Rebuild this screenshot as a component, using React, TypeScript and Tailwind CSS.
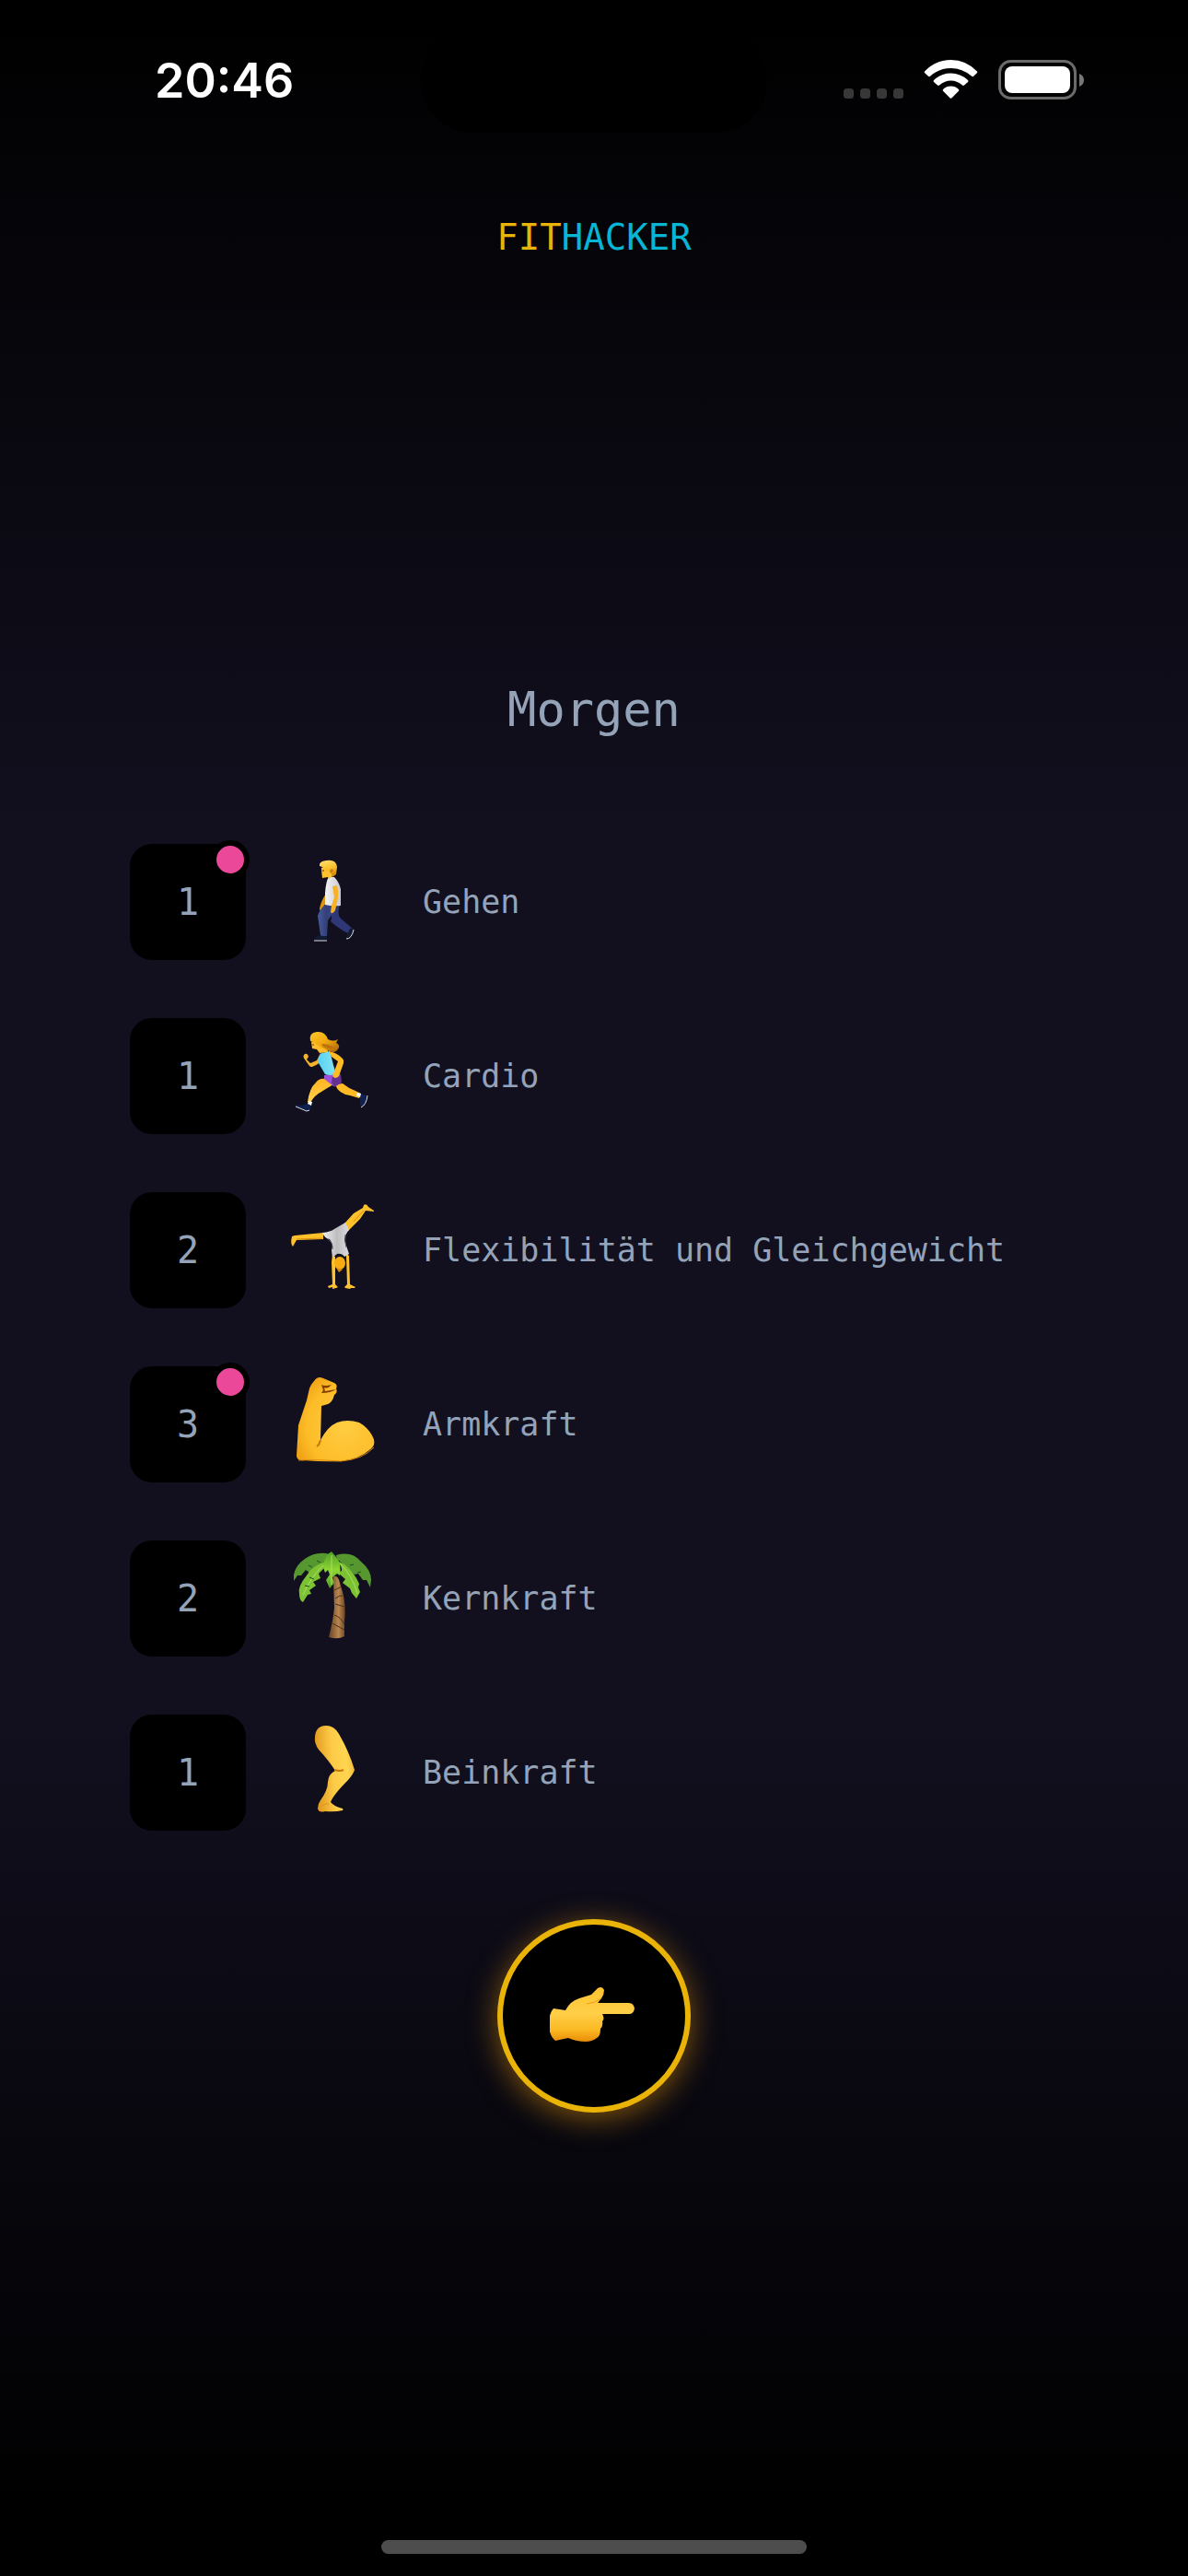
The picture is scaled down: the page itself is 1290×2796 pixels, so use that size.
import type { ReactNode } from "react";

function Walker() {
  return (
    <svg viewBox="0 3 120 130" className="h-full w-full" aria-hidden="true">
      <defs>
        <linearGradient id="jeans" x1="0" x2="1">
          <stop offset="0" stopColor="#465c9b" />
          <stop offset="0.45" stopColor="#344078" />
          <stop offset="1" stopColor="#3e488d" />
        </linearGradient>
        <linearGradient id="shirt" x1="0" x2="1">
          <stop offset="0" stopColor="#f4f4f6" />
          <stop offset="1" stopColor="#c8c8cf" />
        </linearGradient>
        <linearGradient id="hair" x1="0" y1="0" x2="0.3" y2="1">
          <stop offset="0" stopColor="#ffe174" />
          <stop offset="0.6" stopColor="#f9bf2c" />
          <stop offset="1" stopColor="#d18b08" />
        </linearGradient>
      </defs>
      <path d="M54 59Q49 66 47 75q0 3 2 2l6-10z" fill="#dd9511" />
      <path d="M57 72Q62 84 59 89Q64 94 74 100l6 3 4-5-15-13q-3-5 0-14z" fill="#303776" />
      <path d="M53 71h12Q61 82 56 88L55 105q-4 2-7-1L45 83q2-7 8-12z" fill="url(#jeans)" />
      <path d="M57 41l6 0q5 5 7 13v18q-9 1-17-1V58q1-13 4-17z" fill="url(#shirt)" />
      <path d="M61 51l5-1q2 7 1 14l-3 13q-3 5-5 2l1-7 3-9z" fill="#f8b325" />
      <path d="M49 31q0 4 1 11l6-1 1 2 4-3 1-4 2-6-3-5z" fill="#ffc12d" />
      <path d="M47 29q-1-5 7-6 11-2 12 7l-1 8-4 3-2-5-2-3-3 2-1-4z" fill="url(#hair)" />
      <path d="M58 34q3-4 4 0-1 3-4 2" fill="#ce8210" />
      <path d="M47 104q4 2 8 1l1 4-15 1q-1-3 6-6zM80 97l4-1 0 6-5 6-4-1z" fill="#101b31" />
      <path d="M41 110h14M76 108q6 0 8-10" stroke="#dde0e8" strokeWidth="1" fill="none" />
      <path d="M50 34h2" stroke="#4c2803" />
    </svg>
  );
}

function Runner() {
  return (
    <svg viewBox="0 3 120 130" className="h-full w-full" aria-hidden="true">
      <defs>
        <linearGradient id="runnerHair" x1="0" y1="0" x2="1" y2="1">
          <stop offset="0" stopColor="#ffc72c" />
          <stop offset="0.5" stopColor="#f2a90e" />
          <stop offset="1" stopColor="#a65d08" />
        </linearGradient>
        <linearGradient id="top" x1="0" x2="1">
          <stop offset="0" stopColor="#56d2f3" />
          <stop offset="1" stopColor="#86e2f3" />
        </linearGradient>
        <linearGradient id="runnerLeg" x1="0" y1="0" x2="0" y2="1">
          <stop offset="0" stopColor="#ffb521" />
          <stop offset="1" stopColor="#ffd14b" />
        </linearGradient>
      </defs>
      <path d="M48 43L44 51l-7 3-4-4 2-3q-1-4-4-3-3 2 0 6l5 7q2 2 5 0 6-2 9-8z" fill="#f5b32b" />
      <path d="M53 71l11 5q-9 5-15 9-8 4-12 12l-3-1q2-15 9-21 4-5 10-4z" fill="url(#runnerLeg)" />
      <path d="M64 77l8-1q6 5 14 8l6 3-2 5-10-3q-13-2-16-12z" fill="#ffba25" />
      <path d="M52 67l17-1 1 10-8 3-10-8z" fill="#9c50db" />
      <path d="M61 67l9-1 1 9-8 5-3-5z" fill="#663092" />
      <path d="M58 41L49 43Q44 49 46 54l7 12q5 2 11 0 0-5-2-10l-3-12z" fill="url(#top)" />
      <path d="M57 41q8 1 15 8 2 2 1 5l-5 14q-4 4-7 0l3-8 3-8-7-5z" fill="#ffbc24" />
      <path d="M38 31l1 7 5 1 3 4 9-1-1-8-8-6z" fill="#ffbe29" />
      <path d="M37 30q-2-9 7-10 9-1 12 8 6 3 11 0-1 2-2 4 4 2 3 5-4 9-14 2-8-3-14-8z" fill="url(#runnerHair)" />
      <path d="M49 33q7 0 14 4l-4 2-8-3" fill="#bd7209" />
      <path d="M21 99q8 2 13-1l4 3-2 5-15-5zM91 87l7 2q2 5-4 12l-3-1z" fill="#10214f" />
      <path d="M21 101l12 5 3-1M92 102q6-3 7-13" stroke="#dbdee8" strokeWidth="1" fill="none" />
      <path d="M35 95l4 1-1 4-4-2M88 86l4 1-1 4-4-2" fill="#fff" />
      <path d="M39 34l2 0" stroke="#663b0a" />
    </svg>
  );
}

function Cartwheel() {
  return (
    <svg viewBox="0 2 120 130" className="h-full w-full" aria-hidden="true">
      <defs>
        <linearGradient id="leotard" x1="0" x2="1">
          <stop offset="0" stopColor="#f2f2f2" />
          <stop offset="0.55" stopColor="#bdbdc0" />
          <stop offset="1" stopColor="#dcdce0" />
        </linearGradient>
      </defs>
      <path d="M51 48v7l-29 1-4 7q-3-3-1-11l3-1zM74 38L84 27l10-6 1-3q3-2 5 2l6 4v1l-9-1-6 9-13 13z" fill="#ffc12a" />
      <path d="M22 55l28-1M84 36l11-12" stroke="#da8d0c" strokeWidth="1" fill="none" />
      <path d="M61 72l-1 8 1 24-5 2 1 2 4-1 0 2 4-1 2-1-3-3 0-30zM75 70l4 3 1 31 6 3-1 1-4 0-1 1-5-1-1-1 3-3-1-30z" fill="#ffc12d" />
      <path d="M50 48q9-1 13-4l12-7 4 8q-4 4-5 11l5 15-5 3q-3-4-8-3l-5 4-1-8 1-4q0-4-3-8-5 0-8-7z" fill="url(#leotard)" />
      <path d="M56 55q6 4 5 11M75 50q-1 7 1 14" fill="none" stroke="#57575b" />
      <ellipse cx="69" cy="81" rx="6" ry="7" fill="#f7ac14" />
      <path d="M65 86l3 5 4-3z" fill="#d88c08" />
    </svg>
  );
}

function Biceps() {
  return (
    <svg viewBox="0 1 120 130" className="h-full w-full" aria-hidden="true">
      <defs>
        <radialGradient id="arm" cx="0.62" cy="0.58" r="0.68">
          <stop offset="0" stopColor="#ffcd42" />
          <stop offset="0.72" stopColor="#fdbc28" />
          <stop offset="1" stopColor="#f0a315" />
        </radialGradient>
      </defs>
      <path d="M36 27q2-5 5-8 4-6 10-3l12 5q4 2 2 6 2 5-2 7-2 8-7 10l-7 2-1 37q8-15 18-19 11-4 24 0 9 5 14 14 6 10-3 16-10 9-30 12-20 1-40-1-9 1-9-5l2-33 9-27z" fill="url(#arm)" />
      <path d="M24 105q20-1 46 1 24-2 36-15" fill="none" stroke="#d98a0c" strokeWidth="1" />
      <path d="M44 90q3-2 4-7" fill="none" stroke="#c47a08" strokeWidth="2" />
      <path d="M49 23q4 2 11 0-4 5-8 3l1 4 12-2q-6 4-16 4l2-3z" fill="#843e00" />
    </svg>
  );
}

function Palm() {
  return (
    <svg viewBox="0 0 120 130" className="h-full w-full" aria-hidden="true">
      <defs>
        <linearGradient id="trunk" x1="0" x2="1">
          <stop offset="0" stopColor="#674122" />
          <stop offset="0.6" stopColor="#b88751" />
          <stop offset="1" stopColor="#70451f" />
        </linearGradient>
        <linearGradient id="leaf" x1="0" y1="0" x2="0" y2="1">
          <stop offset="0" stopColor="#4e9d25" />
          <stop offset="0.5" stopColor="#8dd733" />
          <stop offset="1" stopColor="#4e9e29" />
        </linearGradient>
      </defs>
      <path d="M62 41q5-2 7 7l3 10q4 14 2 33l0 15q-7 4-17 1 5-20 6-32z" fill="url(#trunk)" />
      <path d="M63 56l8-4M64 65q5-4 8-3M64 71l10 3M63 83q7 2 11 10M61 92l13 7" stroke="#4a301c" strokeWidth="1" fill="none" />
      <path d="M58 17Q44 13 31 22q-10 7-12 17l0 7 4-6 4 0 5-6 4 3 16-11 7-6zM65 18q17-5 27 7 11 9 11 20l-1 8-4-8-4 0-5-7-4 1-19-17z" fill="#56982f" />
      <path d="M55 25q-15 3-22 15-10 12-8 20 0 7 4 9l5-8 4-1-2-4 7-5-3-4 8-4-2-5 6-6zM66 24q6 7 5 11l-4 2 8 7-3 4 8 6 2 5 5 6 4-7-2-5 1-4q-5-12-16-21z" fill="#7cc334" />
      <path d="M60 14q-8 4-9 17l2 6 3-3 2 5-4 6 4 9 5-6-2-6 5-4 3 2q2-14-4-20z" fill="url(#leaf)" />
      <path d="M29 61q9-20 22-32M60 18v32M69 27q14 13 19 33" stroke="#b1dd65" strokeWidth="1" fill="none" />
      <path d="M35 29l4 2M44 24l4 2M84 28l-4 1M92 36l-4 1M36 42l5 2M31 51l5 1" stroke="#1c4d21" strokeWidth="1" />
    </svg>
  );
}

function Leg() {
  return (
    <svg viewBox="0 9 120 130" className="h-full w-full" aria-hidden="true">
      <defs>
        <linearGradient id="leg" x1="0" x2="1" y1="0.15" y2="0">
          <stop offset="0" stopColor="#e39b1f" />
          <stop offset="0.4" stopColor="#fdcb47" />
          <stop offset="0.75" stopColor="#ffd650" />
          <stop offset="1" stopColor="#f0ad2c" />
        </linearGradient>
      </defs>
      <path d="M42 35Q43 23 54 23q9 0 14 9 11 19 17 39-1 4-7 11-16 16-19 24 4 5 13 7 1 1 0 2-9 2-19 1-7 2-8-3 0-5 3-9 8-11 8-20 1-9 8-12Q58 62 46 49q-5-7-4-14z" fill="url(#leg)" />
      <path d="M63 71q6 2 10 0" stroke="#c97808" strokeWidth="2" fill="none" />
      <path d="M50 110q3-3 7-2" stroke="#d9961a" fill="none" />
    </svg>
  );
}

function PointingHand() {
  return (
    <svg viewBox="3 1 96 64" className="h-16 w-24" aria-hidden="true">
      <defs>
        <linearGradient id="hand" x1="0" y1="0" x2="0" y2="1">
          <stop offset="0" stopColor="#ffc32f" />
          <stop offset="0.48" stopColor="#ffcf48" />
          <stop offset="0.78" stopColor="#fbb923" />
          <stop offset="1" stopColor="#e88c08" />
        </linearGradient>
      </defs>
      <path d="M7 25l13 2q5-10 15-13l13-4 7-7q5-3 7 2 0 5-3 9l-4 5h34q5 0 6 6-1 6-6 6H60q3 5 0 8 1 5-2 8 0 8-4 10-5 4-12 4-10 0-19-4L9 60q-7-6-7-18 0-12 5-17z" fill="url(#hand)" />
      <path d="M43 20q9-1 16-6" fill="none" stroke="#ec9b11" strokeWidth="1" />
    </svg>
  );
}

type Exercise = { count: number; label: string; art: ReactNode; marked?: boolean };

const exercises: Exercise[] = [
  { count: 1, label: "Gehen", art: <Walker />, marked: true },
  { count: 1, label: "Cardio", art: <Runner /> },
  { count: 2, label: "Flexibilität und Gleichgewicht", art: <Cartwheel /> },
  { count: 3, label: "Armkraft", art: <Biceps />, marked: true },
  { count: 2, label: "Kernkraft", art: <Palm /> },
  { count: 1, label: "Beinkraft", art: <Leg /> },
];

function StatusBar() {
  return (
    <div className="grid h-44 grid-cols-3 items-start px-28 pt-6">
      <time className="mt-8 pl-14 font-['Inter',sans-serif] text-[52px] leading-[64px] font-semibold text-white">20:46</time>
      <div className="mt-2 h-28 w-94 justify-self-center rounded-full bg-black" />
      <div className="mt-10 flex items-start justify-end">
        <svg viewBox="0 0 264 46" className="h-[46px] w-[264px] shrink-0" role="img" aria-label="WLAN und Akku">
          <g fill="#373737">
            <rect x="2" y="32" width="11" height="11" rx="3.5" />
            <rect x="20" y="32" width="11" height="11" rx="3.5" />
            <rect x="38" y="32" width="11" height="11" rx="3.5" />
            <rect x="56" y="32" width="11" height="11" rx="3.5" />
          </g>
          <g fill="#fff">
            <path d="M90 13.5Q102 1 118.500 1T147 13.500q.7 1-.2 1.800l-3.600 3.500q-1 .8-2 0Q131 10 118.500 10T96 18.800q-1 .8-2 0l-3.800-3.500q-.8-.8-.2-1.800z" />
            <path d="M100 23Q108 15.500 118.500 15.500T137 23q.8 1 0 2l-4 3.600q-1 .8-2 0-6-5-12.500-5t-12.500 5q-1 .8-2 0L100 25q-.8-1 0-2z" />
            <path d="M110 33q3.500-3.400 8.500-3.400T127 33q.7 1 0 1.800l-7.700 7.700q-.8.700-1.600 0L110 34.800q-.7-.8 0-1.800z" />
            <rect x="177" y="8" width="71" height="29" rx="8" />
          </g>
          <rect x="171.500" y="2.500" width="82" height="40" rx="12" fill="none" stroke="#6b6b6b" strokeWidth="3" />
          <path d="M258 16q5 2 5 7t-5 7z" fill="#777" />
        </svg>
      </div>
    </div>
  );
}

export default function App() {
  return (
    <div className="flex min-h-screen flex-col bg-[linear-gradient(to_bottom,#000000_0%,#12101f_33%,#12101f_66%,#000000_98%)] font-['DejaVu_Sans_Mono',monospace] text-[#94a3b8]">
      <StatusBar />
      <header className="mt-14 text-center text-[39px] leading-[52px]">
        <h1>
          <span className="text-[#eab308]">FIT</span>
          <span className="text-[#06b6d4]">HACKER</span>
        </h1>
      </header>
      <main className="mt-[448px] flex flex-1 flex-col items-center">
        <h2 className="text-[52px] leading-[76px]">Morgen</h2>
        <ul className="mt-[108px] flex w-full flex-col gap-[63px] px-[141px]">
          {exercises.map((item) => (
            <li key={item.label} className="flex items-center">
              <div className="relative flex size-[126px] items-center justify-center rounded-3xl bg-black text-[40px]">
                {item.count}
                {item.marked && (
                  <span className="absolute -top-1 -right-1 size-[42px] rounded-full border-6 border-black bg-[#ec4899]" />
                )}
              </div>
              <div className="-my-1 ml-[33px] h-[130px] w-[120px]">{item.art}</div>
              <span className="ml-[39px] text-[35px] leading-[52px] whitespace-nowrap">{item.label}</span>
            </li>
          ))}
        </ul>
        <button
          type="button"
          aria-label="Weiter"
          className="mt-24 flex size-[210px] items-center justify-center rounded-full border-6 border-[#eab308] bg-black shadow-[0_6px_32px_#f59e0b80]"
        >
          <PointingHand />
        </button>
      </main>
      <footer className="flex justify-center pb-6">
        <div className="h-[15px] w-[462px] rounded-full bg-[#4d4d4d]" />
      </footer>
    </div>
  );
}
